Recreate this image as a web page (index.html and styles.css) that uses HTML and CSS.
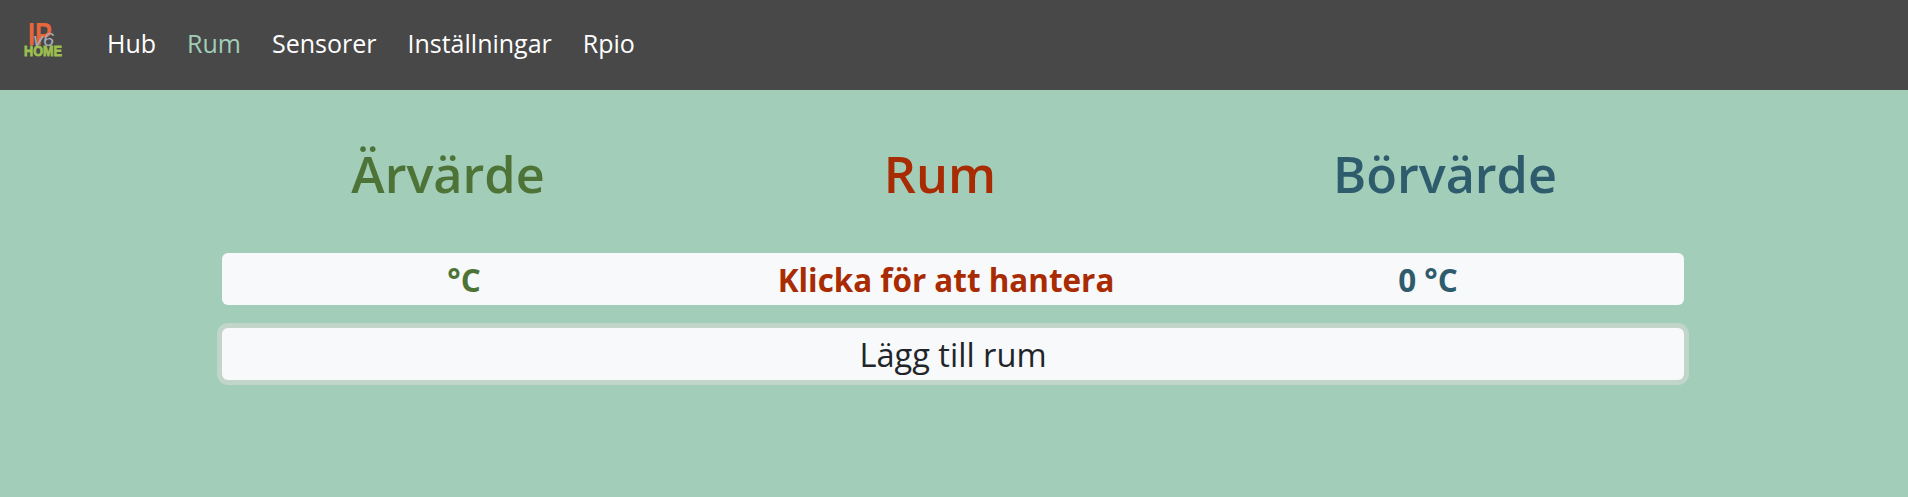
FILE: index.html
```html
<!DOCTYPE html>
<html lang="en">
<head>
  <meta charset="UTF-8">
  <meta name="viewport" content="width=device-width, initial-scale=1.0">
  <title>Rum</title>
  <link rel="stylesheet" href="styles.css">
</head>
<body>
  <nav class="navbar">
    <a class="brand" href="#">
      <svg class="logo" width="50" height="50" viewBox="0 0 50 50">
        <text class="logo-ip" x="9" y="28" textLength="24" lengthAdjust="spacingAndGlyphs">IP</text>
        <text class="logo-v6" x="14" y="29" textLength="21" lengthAdjust="spacingAndGlyphs">v6</text>
        <text class="logo-home" x="5" y="39" textLength="38" lengthAdjust="spacingAndGlyphs">HOME</text>
      </svg>
    </a>
    <a class="nav-link" href="#">Hub</a>
    <a class="nav-link active" href="#">Rum</a>
    <a class="nav-link" href="#">Sensorer</a>
    <a class="nav-link" href="#">Inställningar</a>
    <a class="nav-link" href="#">Rpio</a>
  </nav>
  <div class="container">
    <div class="headings">
      <h1 class="green">Ärvärde</h1>
      <h1 class="red">Rum</h1>
      <h1 class="blue">Börvärde</h1>
    </div>
    <button class="room" type="button">
      <span class="green">°C</span>
      <span class="red">Klicka för att hantera</span>
      <span class="blue">0 °C</span>
    </button>
    <button class="add" type="button">Lägg till rum</button>
  </div>
</body>
</html>
```

FILE: styles.css
```css
body {
  font-family: "Open Sans", "Noto Sans", sans-serif;
  background-color: #a1cdb9;
  margin: 0;
  padding: 0;
  height: 497px;
  overflow: hidden;
}

.navbar {
  display: flex;
  align-items: center;
  height: 90px;
  background-color: #484848;
  padding-left: 19px;
  padding-bottom: 4px;
  box-sizing: border-box;
}

.brand {
  display: block;
  width: 50px;
  height: 50px;
  margin-right: 38px;
  margin-top: -2px;
}

.logo-ip {
  font-family: "Liberation Sans", sans-serif;
  font-size: 32px;
  font-weight: bold;
  fill: #e8663c;
}

.logo-v6 {
  font-family: "Liberation Sans", sans-serif;
  font-size: 18px;
  font-style: italic;
  fill: #a3adb8;
}

.logo-home {
  font-family: "Liberation Sans", sans-serif;
  font-size: 14px;
  font-weight: bold;
  fill: #9dbf4f;
  stroke: #9dbf4f;
  stroke-width: 0.8px;
}

.nav-link {
  font-size: 25px;
  color: #fff;
  text-decoration: none;
  margin-right: 31px;
}

.nav-link.active {
  color: #a1cdb9;
}

.container {
  margin-left: 222px;
  width: 1462px;
}

.headings {
  display: grid;
  grid-template-columns: 492px 492px 518px;
  margin-left: -20px;
  padding-top: 53px;
}

h1 {
  font-size: 50.4px;
  font-weight: 600;
  line-height: 62px;
  margin: 0 0 48px;
  text-align: center;
}

.green {
  color: #4e7337;
}

.red {
  color: #a92b02;
}

.blue {
  color: #2f5c6c;
}

.room,
.add {
  display: block;
  width: 100%;
  height: 52px;
  border: none;
  border-radius: 6px;
  background-color: #f8f9fa;
  font-family: inherit;
  padding: 0;
}

.room {
  display: grid;
  grid-template-columns: repeat(3, 482px);
  align-items: center;
  font-size: 31.4px;
  font-weight: 700;
  padding-left: 1px;
  margin-bottom: 23px;
}

.add {
  font-size: 32.6px;
  color: #212529;
  box-shadow: 0 0 0 5px #c1d5ca;
}
```
